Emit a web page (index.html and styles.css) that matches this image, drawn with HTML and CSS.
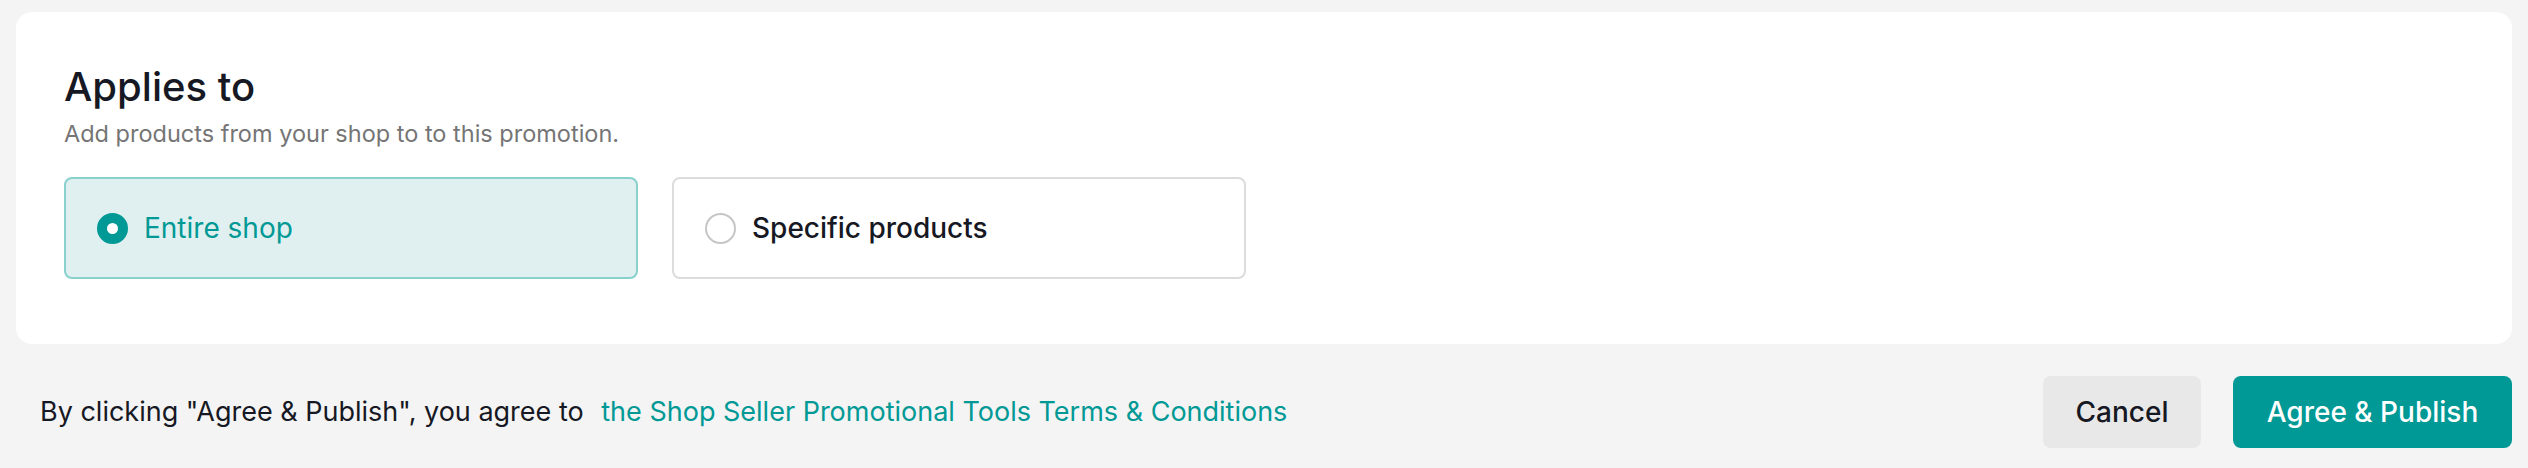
FILE: index.html
```html
<!DOCTYPE html>
<html lang="en">
<head>
<meta charset="utf-8">
<title>Applies to</title>
<link rel="stylesheet" href="styles.css">
</head>
<body>
<div class="page">
  <section class="card">
    <h2 class="title">Applies to</h2>
    <p class="subtitle">Add products from your shop to to this promotion.</p>
    <div class="options">
      <label class="option option--selected">
        <span class="radio radio--checked"></span>
        <span class="option-label">Entire shop</span>
      </label>
      <label class="option">
        <span class="radio"></span>
        <span class="option-label">Specific products</span>
      </label>
    </div>
  </section>
  <footer class="footer">
    <p class="terms">By clicking "Agree &amp; Publish", you agree to <a class="terms-link" href="#">the Shop Seller Promotional Tools Terms &amp; Conditions</a></p>
    <div class="actions">
      <button class="btn btn--secondary" type="button">Cancel</button>
      <button class="btn btn--primary" type="button">Agree &amp; Publish</button>
    </div>
  </footer>
</div>
</body>
</html>
```
FILE: styles.css
```css
* { box-sizing: border-box; }
html, body { margin: 0; padding: 0; }
body {
  background: #f4f4f4;
  font-family: Inter, "Noto Sans", "Liberation Sans", sans-serif;
  color: #161823;
}
.page {
  padding: 12px 16px 0;
}
.card {
  background: #ffffff;
  border-radius: 16px;
  padding: 51px 48px 65px;
}
.title {
  margin: 0;
  font-size: 40px;
  line-height: 48px;
  font-weight: 500;
  color: #161823;
}
.subtitle {
  margin: 8px 0 0;
  font-size: 23.5px;
  line-height: 30px;
  color: #757575;
}
.options {
  display: flex;
  gap: 34px;
  margin-top: 28px;
}
.option {
  width: 574px;
  height: 102px;
  display: flex;
  align-items: center;
  gap: 16px;
  padding: 0 31px;
  border: 2px solid #dcdcdc;
  border-radius: 8px;
  background: #ffffff;
  cursor: pointer;
}
.option--selected {
  background: #e0f0f0;
  border-color: #88d1cd;
}
.radio {
  width: 31px;
  height: 31px;
  border-radius: 50%;
  border: 2px solid #c6c6c6;
  background: #ffffff;
  flex: none;
}
.radio--checked {
  border: 10px solid #009995;
  background: #ffffff;
}
.option-label {
  font-size: 28px;
  line-height: 34px;
  font-weight: 500;
  color: #161823;
}
.option--selected .option-label {
  color: #009995;
  font-weight: 400;
}
.footer {
  display: flex;
  align-items: center;
  justify-content: space-between;
  padding: 32px 0 20px 24px;
}
.terms {
  margin: 0;
  font-size: 27px;
  line-height: 34px;
  color: #161823;
}
.terms-link {
  color: #009995;
  text-decoration: none;
  margin-left: 10px;
}
.actions {
  display: flex;
  gap: 32px;
}
.btn {
  height: 72px;
  border: none;
  border-radius: 8px;
  font-family: inherit;
  font-size: 28px;
  font-weight: 500;
  padding: 0;
  white-space: nowrap;
  cursor: pointer;
}
.btn--secondary {
  background: #e8e8e8;
  color: #161823;
  width: 158px;
}
.btn--primary {
  background: #009995;
  color: #ffffff;
  width: 279px;
}
```
